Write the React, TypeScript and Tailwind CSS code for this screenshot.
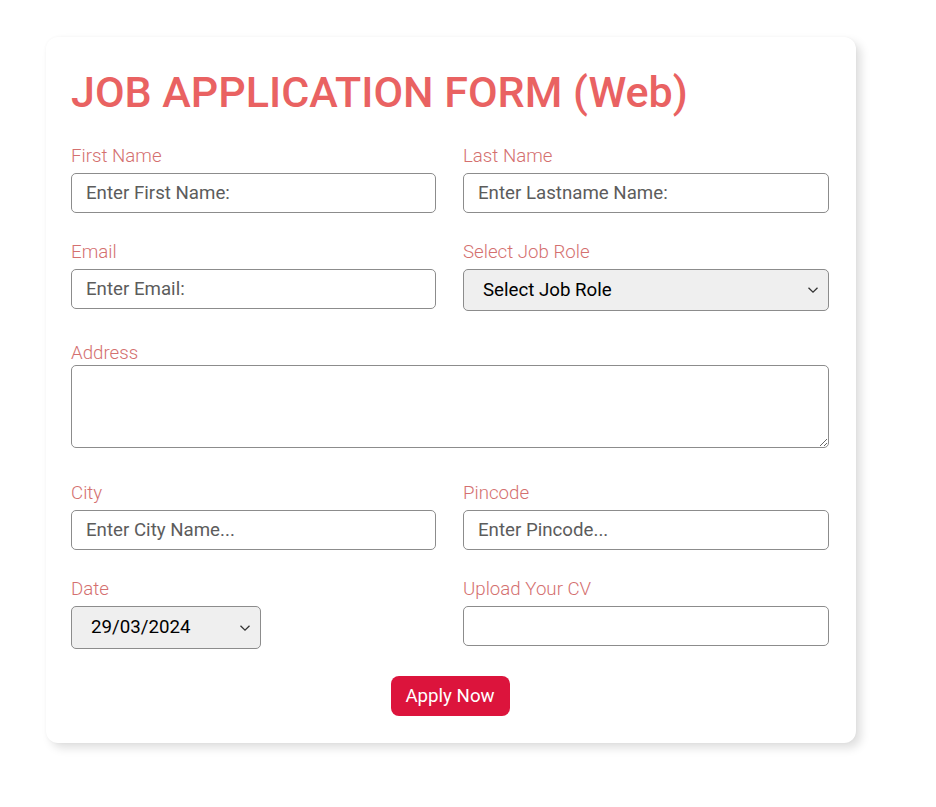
import React from "react";

function Label({ children, className = "" }: { children: React.ReactNode; className?: string }) {
  return (
    <label className={`block text-[18.7px] leading-[22px] font-light text-[#d4706f] ${className}`}>
      {children}
    </label>
  );
}

function TextField({ label, placeholder }: { label: string; placeholder: string }) {
  return (
    <div>
      <Label className="mb-[6px]">{label}</Label>
      <input
        type="text"
        placeholder={placeholder}
        className="block w-full h-[40px] rounded-[5px] border border-[#8c8c8c] bg-white px-[14px] text-[18.7px] text-[#222] placeholder:text-[#5c5c5c] outline-none"
      />
    </div>
  );
}

function Chevron() {
  return (
    <svg width="12" height="8" viewBox="0 0 12 8" className="pointer-events-none absolute top-1/2 -translate-y-1/2 right-[10px]">
      <path d="M1.5 1.8 L6 6.2 L10.5 1.8" fill="none" stroke="#333" strokeWidth="1.3" />
    </svg>
  );
}

export default function App() {
  return (
    <div className="min-h-[807px] bg-white pt-[37px] pl-[46px]" style={{ fontFamily: "Roboto, 'Liberation Sans', sans-serif" }}>
      <form
        className="w-[810px] rounded-[12px] bg-white pl-[25px] pr-[27px] pt-[30px] pb-[27px] shadow-[5px_5px_10px_rgba(0,0,0,0.13),0_0_3px_rgba(0,0,0,0.04)]"
        onSubmit={(e) => e.preventDefault()}
      >
        <h1 className="text-[43px] leading-[50px] font-medium text-[#e96262] mb-[28px]">
          JOB APPLICATION FORM (Web)
        </h1>

        <div className="grid grid-cols-[365px_366px] gap-x-[27px]">
          <TextField label="First Name" placeholder="Enter First Name:" />
          <TextField label="Last Name" placeholder="Enter Lastname Name:" />
        </div>

        <div className="grid grid-cols-[365px_366px] gap-x-[27px] mt-[28px]">
          <TextField label="Email" placeholder="Enter Email:" />
          <div>
            <Label className="mb-[6px]">Select Job Role</Label>
            <div className="relative">
              <select
                defaultValue=""
                className="block w-full h-[42px] appearance-none rounded-[5px] border border-[#8c8c8c] bg-[#efefef] pl-[19px] pr-[30px] text-[18.7px] text-black outline-none"
              >
                <option value="">Select Job Role</option>
                <option value="frontend">Frontend Developer</option>
                <option value="backend">Backend Developer</option>
                <option value="designer">UI/UX Designer</option>
              </select>
              <Chevron />
            </div>
          </div>
        </div>

        <div className="mt-[31px]">
          <Label className="mb-[1px]">Address</Label>
          <textarea className="block w-full h-[83px] rounded-[5px] border border-[#8c8c8c] bg-white px-[14px] py-[8px] text-[18.7px] outline-none" />
        </div>

        <div className="grid grid-cols-[365px_366px] gap-x-[27px] mt-[34px]">
          <TextField label="City" placeholder="Enter City Name..." />
          <TextField label="Pincode" placeholder="Enter Pincode..." />
        </div>

        <div className="grid grid-cols-[365px_366px] gap-x-[27px] mt-[28px]">
          <div>
            <Label className="mb-[6px]">Date</Label>
            <div className="relative w-[190px]">
              <select
                defaultValue="2024-03-29"
                className="block w-full h-[43px] appearance-none rounded-[5px] border border-[#8c8c8c] bg-[#efefef] pl-[19px] pr-[30px] text-[18.7px] text-black outline-none"
              >
                <option value="2024-03-29">29/03/2024</option>
              </select>
              <Chevron />
            </div>
          </div>
          <div>
            <Label className="mb-[6px]">Upload Your CV</Label>
            <div className="h-[40px] w-full rounded-[5px] border border-[#8c8c8c] bg-white" />
          </div>
        </div>

        <div className="flex justify-center mt-[27px]">
          <button
            type="submit"
            className="h-[40px] w-[119px] rounded-[8px] bg-[#dc143c] text-[18.7px] text-white"
          >
            Apply Now
          </button>
        </div>
      </form>
    </div>
  );
}
